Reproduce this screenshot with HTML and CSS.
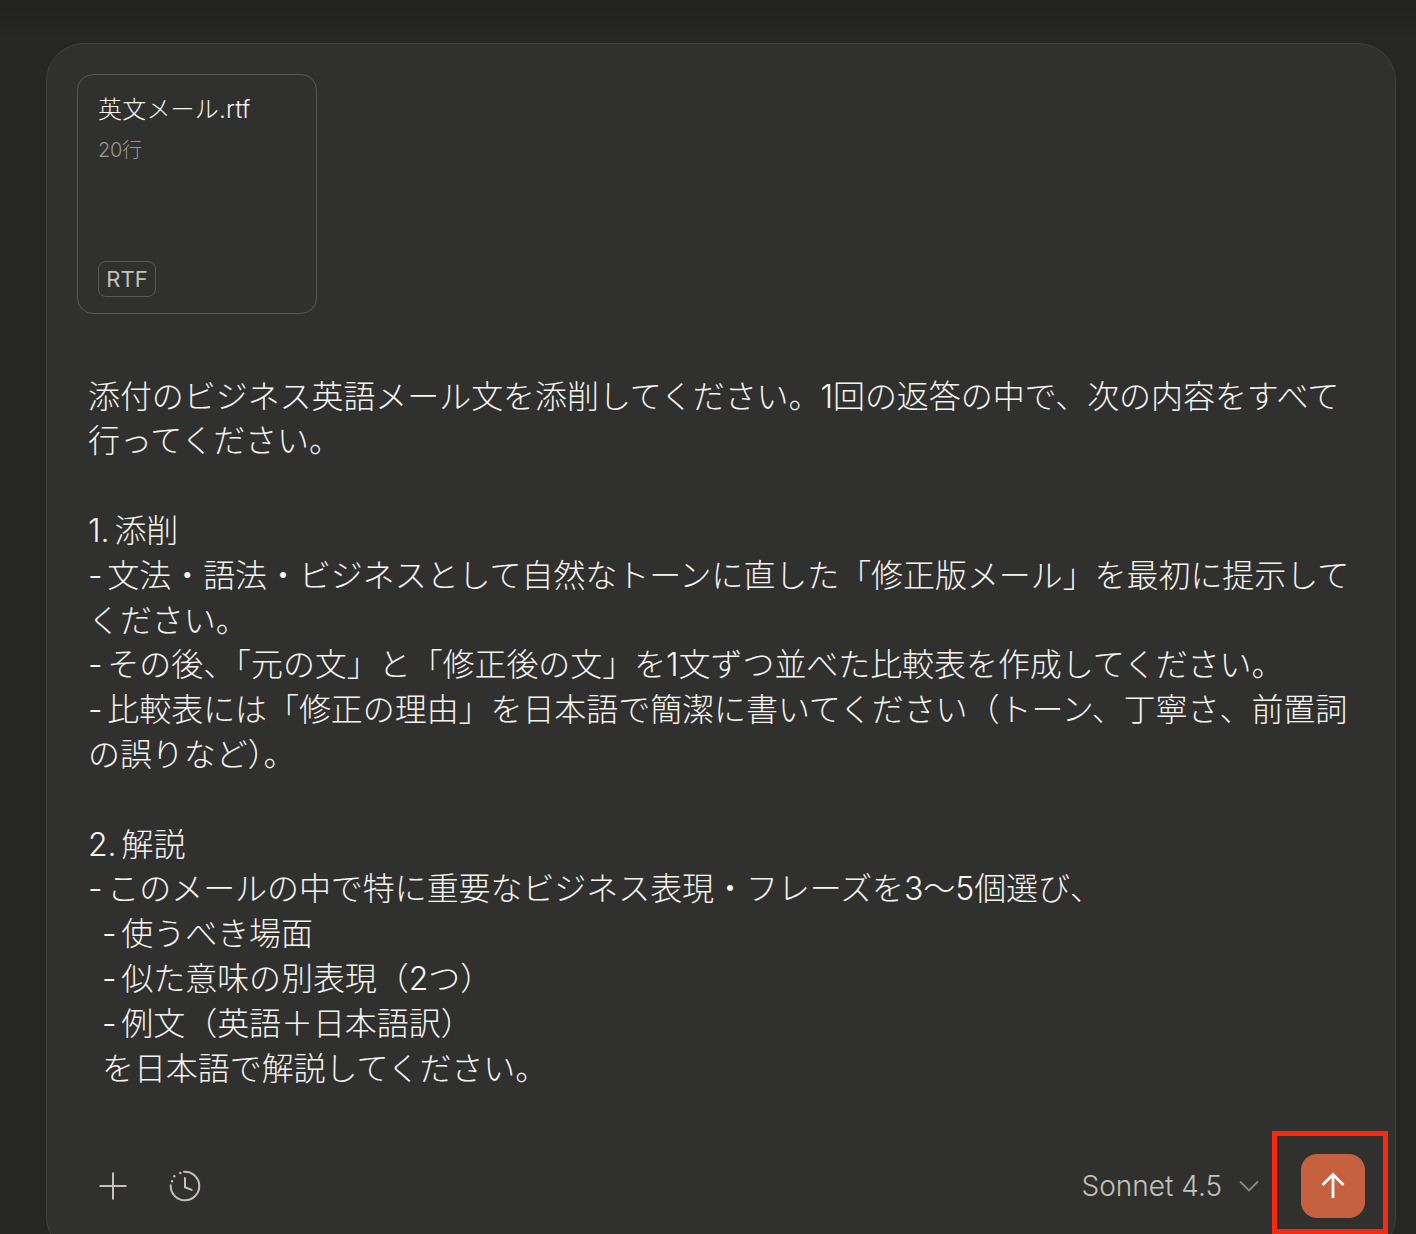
FILE: index.html
```html
<!DOCTYPE html>
<html lang="ja">
<head>
<meta charset="utf-8">
<title>Composer</title>
<link rel="stylesheet" href="styles.css">
</head>
<body>
<main class="composer">
  <section class="attachment">
    <div class="att-name">英文メール.rtf</div>
    <div class="att-lines">20行</div>
    <div class="att-tag">RTF</div>
  </section>
  <div class="prompt">
    <p>添付のビジネス英語メール文を添削してください。1回の返答の中で、次の内容をすべて行ってください。</p>
    <p class="gap">1. 添削</p>
    <p>- 文法・語法・ビジネスとして自然なトーンに直した「修正版メール」を最初に提示してください。</p>
    <p>- その後、「元の文」と「修正後の文」を1文ずつ並べた比較表を作成してください。</p>
    <p>- 比較表には「修正の理由」を日本語で簡潔に書いてください（トーン、丁寧さ、前置詞の誤りなど）。</p>
    <p class="gap">2. 解説</p>
    <p>- このメールの中で特に重要なビジネス表現・フレーズを3〜5個選び、</p>
    <p class="indent">- 使うべき場面</p>
    <p class="indent">- 似た意味の別表現（2つ）</p>
    <p class="indent">- 例文（英語＋日本語訳）</p>
    <p class="indent">を日本語で解説してください。</p>
  </div>
  <footer class="toolbar">
    <div class="tools">
      <svg class="icon" width="32" height="32" viewBox="0 0 32 32" fill="none" stroke="#c4c2b8" stroke-width="2"><path d="M16 2.500v27M2.500 16h27"/></svg>
      <svg class="icon" width="32" height="32" viewBox="0 0 32 32" fill="none" stroke="#c4c2b8" stroke-width="2" stroke-linecap="round"><path d="M15 1.750A14.300 14.300 0 1 1 1.700 15.300"/><path d="M16 8v9.200l6.700 2.700"/><path d="M11.300 3h.1M5.300 6.300h.1M3 11.300h.1" stroke-width="2.400"/></svg>
    </div>
    <div class="actions">
      <span class="model">Sonnet 4.5</span>
      <svg class="chevron" width="20" height="12" viewBox="0 0 20 12" fill="none" stroke="#8a8880" stroke-width="1.800"><path d="M1 1.500l9 9 9-9"/></svg>
      <div class="send-wrap">
        <button class="send" type="button" aria-label="送信">
          <svg width="26" height="28" viewBox="0 0 26 28" fill="none" stroke="#fff" stroke-width="2.800"><path d="M13 26V3M2.500 13L13 2.500 23.500 13"/></svg>
        </button>
        <div class="highlight"></div>
      </div>
    </div>
  </footer>
</main>
</body>
</html>
```
FILE: styles.css
```css
* { box-sizing: border-box; }
html, body { margin: 0; height: 1234px; overflow: hidden; }
body {
  background: linear-gradient(#232321 0, #262624 40px);
  padding: 43px 20px 0 46px;
  font-family: Inter, "Noto Sans CJK JP", sans-serif;
  color: #f5f4ef;
}
.composer {
  width: 1350px;
  height: 1212px;
  background: #30302e;
  border: 1px solid #40403d;
  border-radius: 38px;
  padding: 30px 30px 0;
  display: flex;
  flex-direction: column;
}
.attachment {
  width: 240px;
  height: 240px;
  flex: none;
  border: 1px solid #5a5954;
  border-radius: 16px;
  padding: 20px 20px 16px;
  display: flex;
  flex-direction: column;
}
.att-name { font-size: 24px; line-height: 28px; margin-top: 1px; font-weight: 300; letter-spacing: 0.2px; }
.att-lines { font-size: 20px; line-height: 28px; margin-top: 12px; color: #9a9890; font-weight: 300; letter-spacing: -0.3px; }
.att-tag {
  margin-top: auto;
  align-self: flex-start;
  height: 36px;
  width: 58px;
  border: 1px solid #5a5954;
  border-radius: 8px;
  font-size: 22px;
  line-height: 34px;
  text-align: center;
  color: #c4c2b8;
  font-weight: 400;
}
.prompt {
  margin: 60.6px 8px 0 11px;
  height: 759.4px;
  font-size: 32px;
  line-height: 44.8px;
  font-weight: 300;
  letter-spacing: -0.07px;
  word-spacing: -4px;
}
.prompt p { margin: 0; }
.prompt .gap { margin-top: 44.8px; }
.prompt .indent { padding-left: 14px; }
.toolbar {
  display: flex;
  justify-content: space-between;
  align-items: center;
  height: 64px;
  margin-top: 20px;
}
.tools { display: flex; align-items: center; gap: 40px; padding-left: 20px; }
.icon { display: block; }
.actions { display: flex; align-items: center; }
.model { font-size: 28px; font-weight: 300; color: #c4c2b8; }
.chevron { margin: 0 42px 0 17px; display: block; }
.send-wrap { position: relative; }
.send {
  width: 64px;
  height: 64px;
  border: 0;
  border-radius: 16px;
  background: #c6613f;
  display: flex;
  align-items: center;
  justify-content: center;
  padding: 0;
}
.highlight {
  position: absolute;
  left: -29px;
  top: -23px;
  width: 116px;
  height: 103px;
  border: 5px solid #f52a0e;
}
```
